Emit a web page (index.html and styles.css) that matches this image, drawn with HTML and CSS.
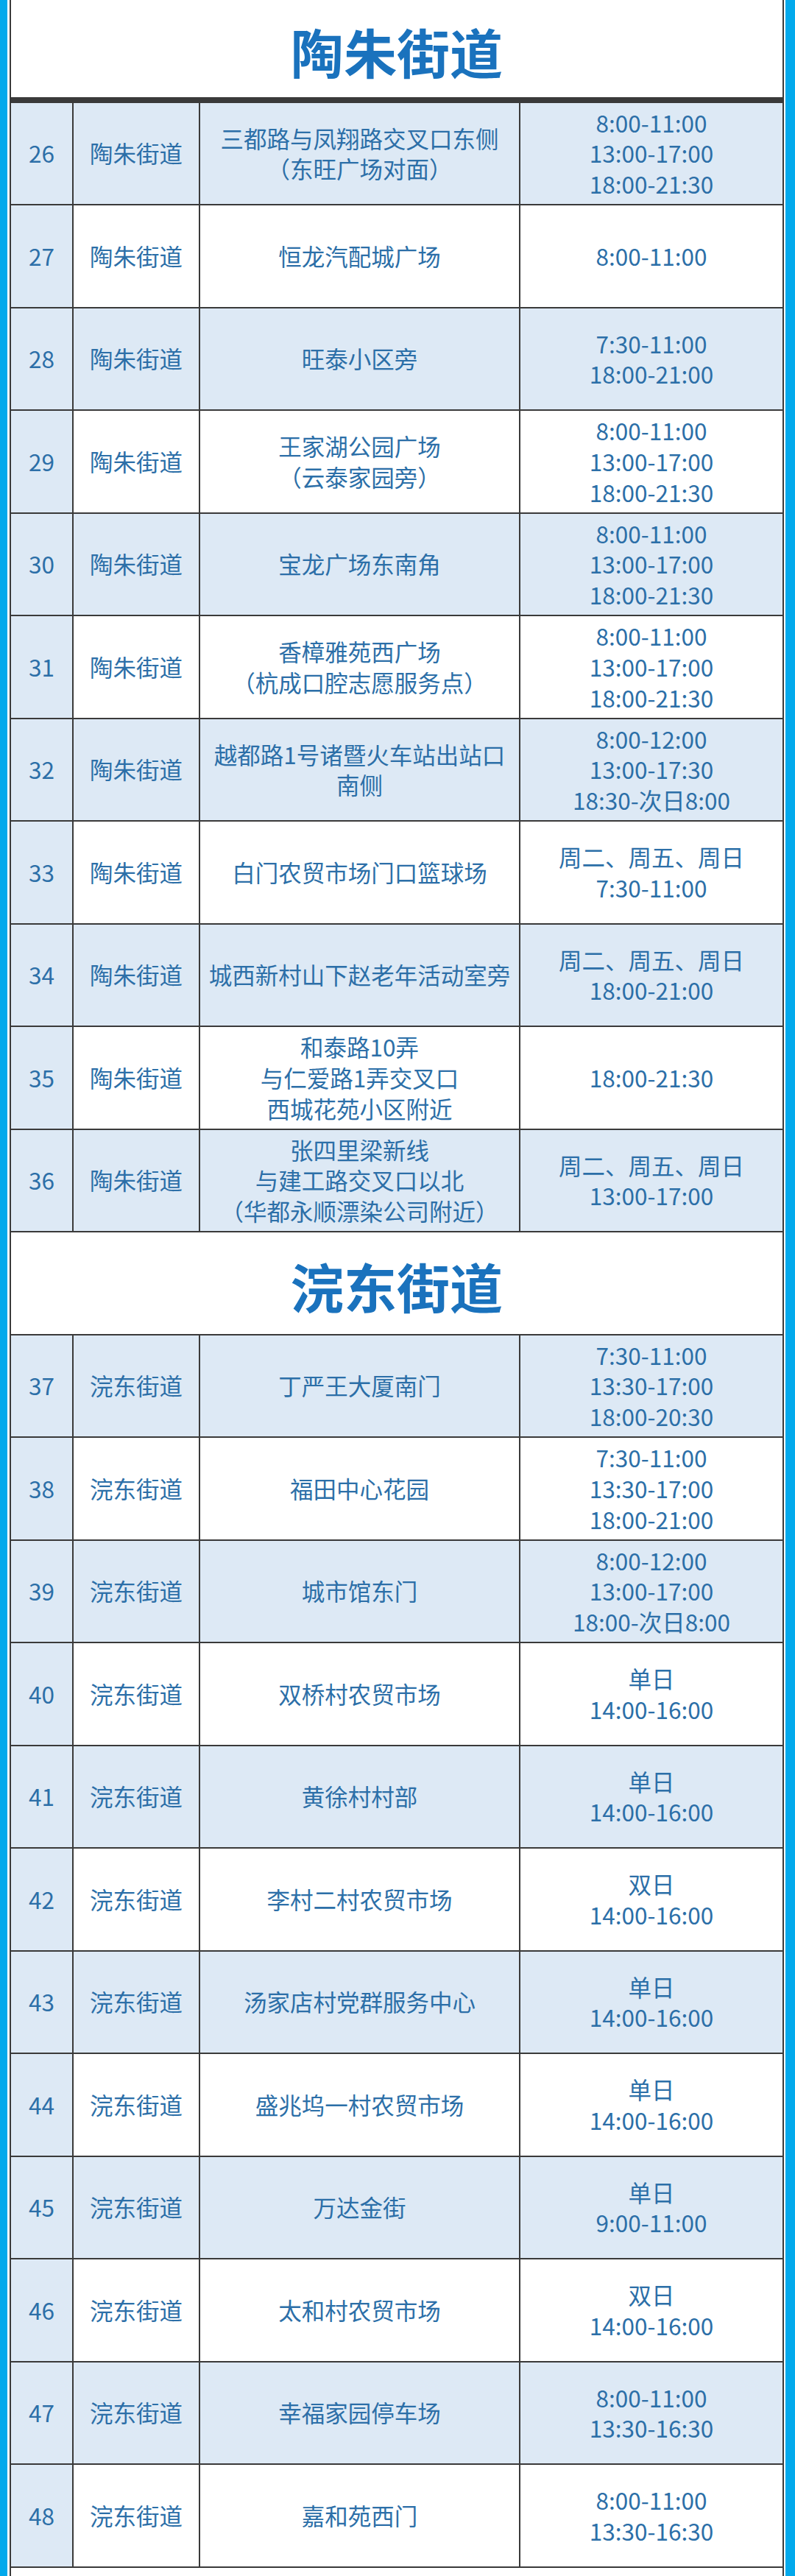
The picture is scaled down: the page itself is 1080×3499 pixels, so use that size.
FILE: index.html
```html
<!DOCTYPE html>
<html lang="zh-CN">
<head>
<meta charset="utf-8">
<title>诸暨便民点</title>
<link rel="stylesheet" href="styles.css">
</head>
<body>
<div class="frame">
  <div class="sheet">
    <div class="head head-first">陶朱街道</div>

    <div class="c num">26</div><div class="c alt">陶朱街道</div><div class="c alt">三都路与凤翔路交叉口东侧<br>（东旺广场对面）</div><div class="c alt">8:00-11:00<br>13:00-17:00<br>18:00-21:30</div>
    <div class="c num">27</div><div class="c">陶朱街道</div><div class="c">恒龙汽配城广场</div><div class="c">8:00-11:00</div>
    <div class="c num">28</div><div class="c alt">陶朱街道</div><div class="c alt">旺泰小区旁</div><div class="c alt">7:30-11:00<br>18:00-21:00</div>
    <div class="c num">29</div><div class="c">陶朱街道</div><div class="c">王家湖公园广场<br>（云泰家园旁）</div><div class="c">8:00-11:00<br>13:00-17:00<br>18:00-21:30</div>
    <div class="c num">30</div><div class="c alt">陶朱街道</div><div class="c alt">宝龙广场东南角</div><div class="c alt">8:00-11:00<br>13:00-17:00<br>18:00-21:30</div>
    <div class="c num">31</div><div class="c">陶朱街道</div><div class="c">香樟雅苑西广场<br>（杭成口腔志愿服务点）</div><div class="c">8:00-11:00<br>13:00-17:00<br>18:00-21:30</div>
    <div class="c num">32</div><div class="c alt">陶朱街道</div><div class="c alt">越都路1号诸暨火车站出站口<br>南侧</div><div class="c alt">8:00-12:00<br>13:00-17:30<br>18:30-次日8:00</div>
    <div class="c num">33</div><div class="c">陶朱街道</div><div class="c">白门农贸市场门口篮球场</div><div class="c">周二、周五、周日<br>7:30-11:00</div>
    <div class="c num">34</div><div class="c alt">陶朱街道</div><div class="c alt">城西新村山下赵老年活动室旁</div><div class="c alt">周二、周五、周日<br>18:00-21:00</div>
    <div class="c num">35</div><div class="c">陶朱街道</div><div class="c">和泰路10弄<br>与仁爱路1弄交叉口<br>西城花苑小区附近</div><div class="c">18:00-21:30</div>
    <div class="c num">36</div><div class="c alt">陶朱街道</div><div class="c alt">张四里梁新线<br>与建工路交叉口以北<br>（华都永顺漂染公司附近）</div><div class="c alt">周二、周五、周日<br>13:00-17:00</div>

    <div class="head">浣东街道</div>

    <div class="c num">37</div><div class="c alt">浣东街道</div><div class="c alt">丁严王大厦南门</div><div class="c alt">7:30-11:00<br>13:30-17:00<br>18:00-20:30</div>
    <div class="c num">38</div><div class="c">浣东街道</div><div class="c">福田中心花园</div><div class="c">7:30-11:00<br>13:30-17:00<br>18:00-21:00</div>
    <div class="c num">39</div><div class="c alt">浣东街道</div><div class="c alt">城市馆东门</div><div class="c alt">8:00-12:00<br>13:00-17:00<br>18:00-次日8:00</div>
    <div class="c num">40</div><div class="c">浣东街道</div><div class="c">双桥村农贸市场</div><div class="c">单日<br>14:00-16:00</div>
    <div class="c num">41</div><div class="c alt">浣东街道</div><div class="c alt">黄徐村村部</div><div class="c alt">单日<br>14:00-16:00</div>
    <div class="c num">42</div><div class="c">浣东街道</div><div class="c">李村二村农贸市场</div><div class="c">双日<br>14:00-16:00</div>
    <div class="c num">43</div><div class="c alt">浣东街道</div><div class="c alt">汤家店村党群服务中心</div><div class="c alt">单日<br>14:00-16:00</div>
    <div class="c num">44</div><div class="c">浣东街道</div><div class="c">盛兆坞一村农贸市场</div><div class="c">单日<br>14:00-16:00</div>
    <div class="c num">45</div><div class="c alt">浣东街道</div><div class="c alt">万达金街</div><div class="c alt">单日<br>9:00-11:00</div>
    <div class="c num">46</div><div class="c">浣东街道</div><div class="c">太和村农贸市场</div><div class="c">双日<br>14:00-16:00</div>
    <div class="c num">47</div><div class="c alt">浣东街道</div><div class="c alt">幸福家园停车场</div><div class="c alt">8:00-11:00<br>13:30-16:30</div>
    <div class="c num">48</div><div class="c">浣东街道</div><div class="c">嘉和苑西门</div><div class="c">8:00-11:00<br>13:30-16:30</div>

    <div class="tail"></div>
  </div>
</div>
</body>
</html>
```

FILE: styles.css
```css
html, body {
  margin: 0;
  padding: 0;
  background: #ffffff;
}

.frame {
  box-sizing: border-box;
  height: 3499px;
  overflow: hidden;
  border-left: 10px solid #02a9ec;
  border-right: 13px solid #02a9ec;
  padding: 0 2px 0 3px;
  background: #ffffff;
  font-family: "Noto Sans CJK SC", "Noto Sans", sans-serif;
}

.sheet {
  display: grid;
  grid-template-columns: 83px 170px 433px 356px;
  grid-auto-rows: 137.5px;
  column-gap: 2px;
  row-gap: 2px;
  padding: 0 2px;
  background: #3a3a3a;
}

.head {
  grid-column: 1 / -1;
  background: #ffffff;
  color: #1a72bd;
  font-size: 72px;
  font-weight: 700;
  line-height: 1;
  display: flex;
  align-items: center;
  justify-content: center;
  padding-top: 6px;
  box-sizing: border-box;
  height: 138px;
}

.head-first {
  height: 132px;
}

.c {
  background: #ffffff;
  color: #2c6fa8;
  font-size: 31.5px;
  line-height: 41.7px;
  text-align: center;
  display: flex;
  align-items: center;
  justify-content: center;
}

.c.alt,
.c.num {
  background: #dde9f5;
}

.tail {
  grid-column: 1 / -1;
  background: #ffffff;
  height: 40px;
}
```
